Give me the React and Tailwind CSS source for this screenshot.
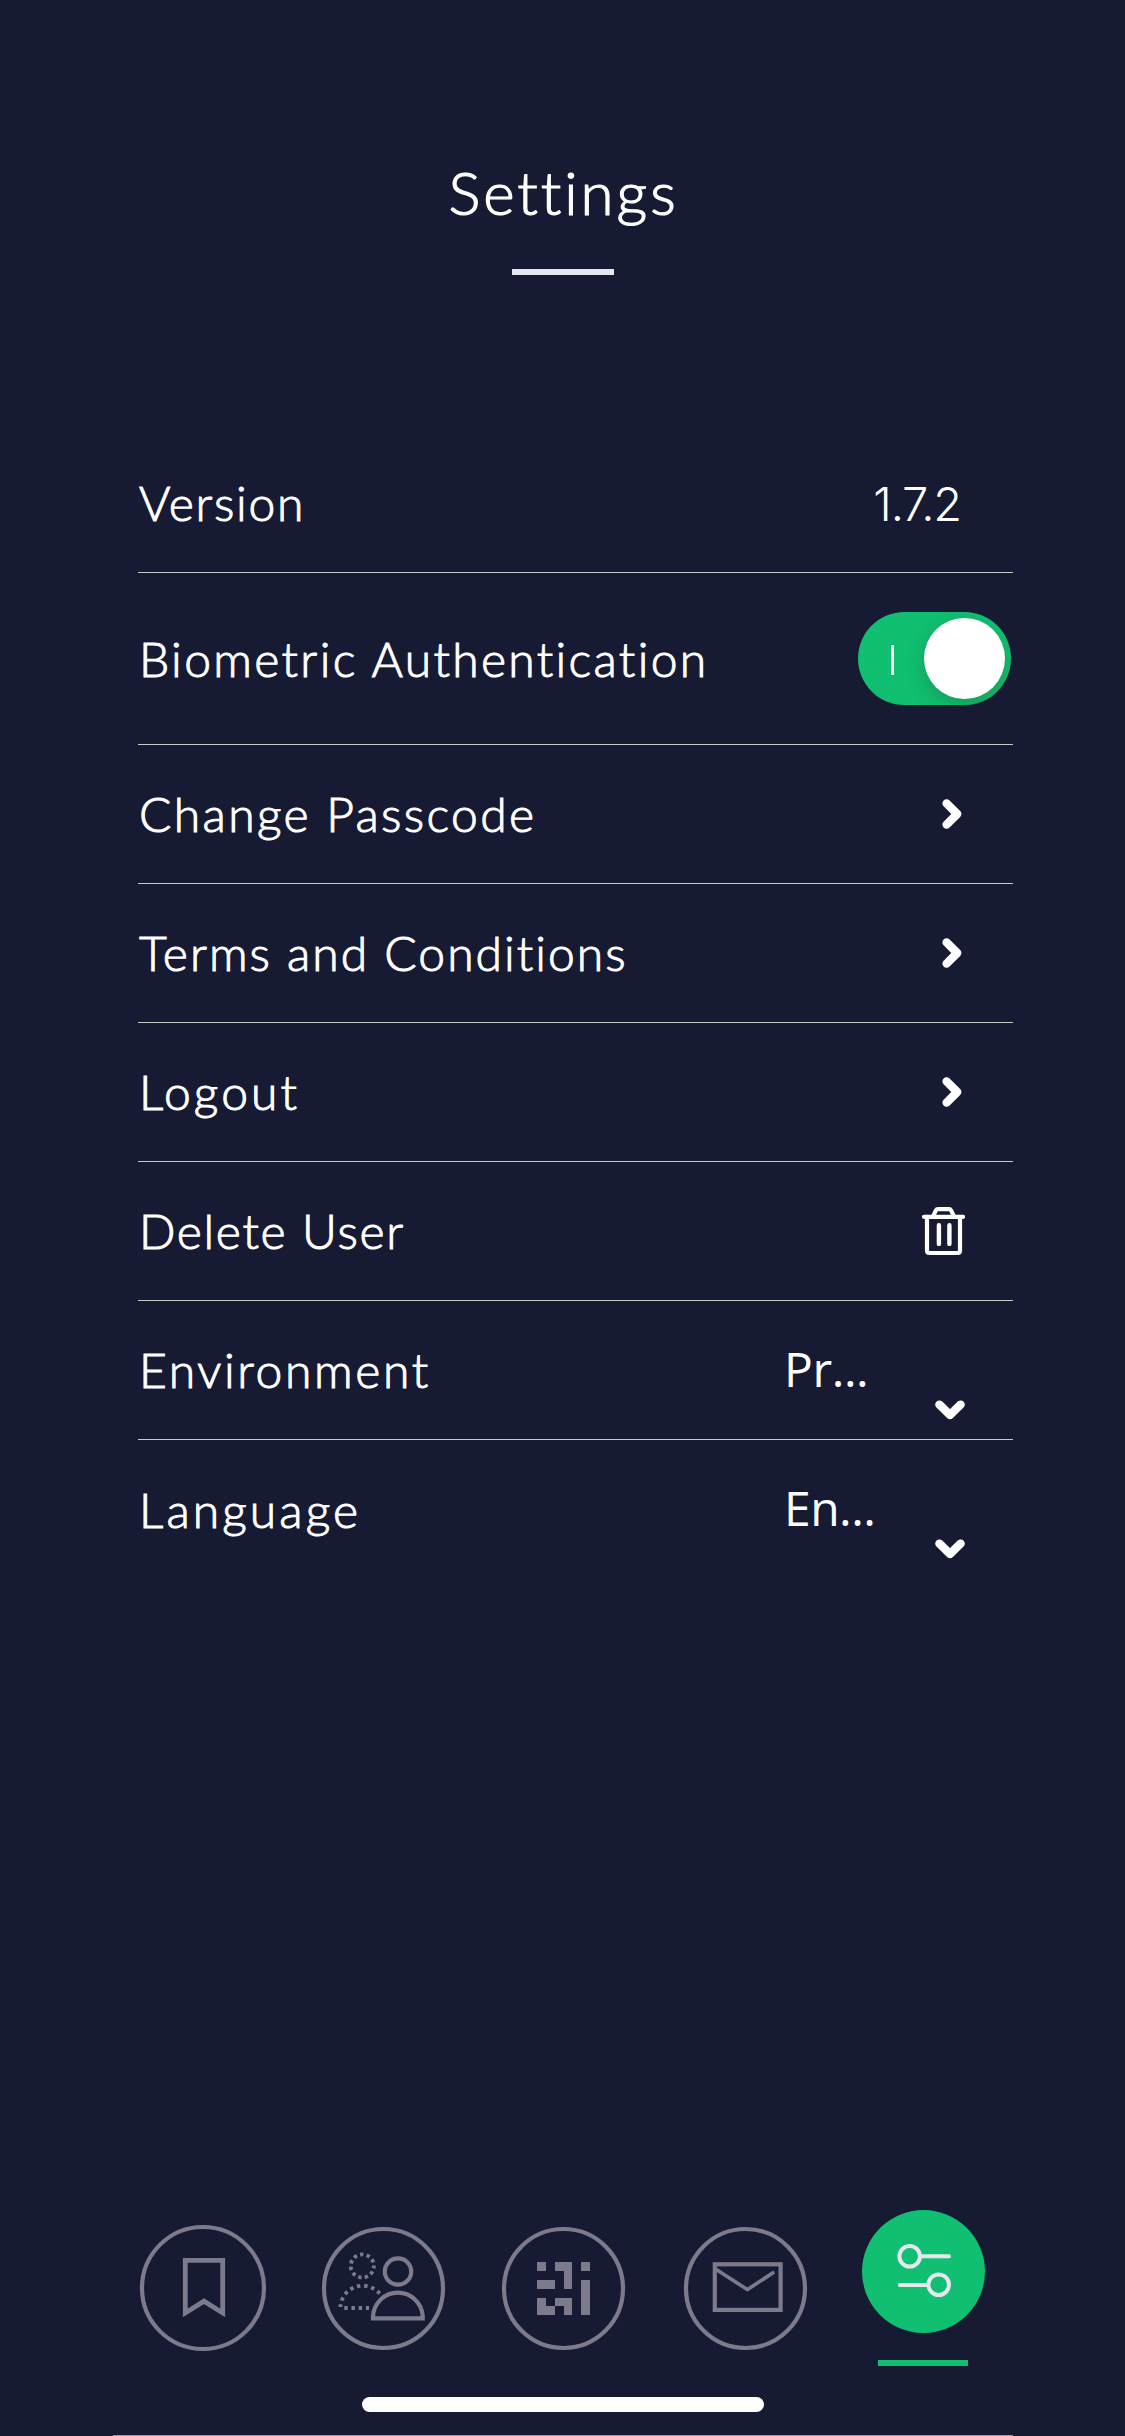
import React from "react";

const LABEL = "block whitespace-pre font-['Lato',sans-serif] text-[48px] font-light leading-[58px] [-webkit-text-stroke:1px_white]";

function Row({ label, labelClass, tall, last, align = "items-center", children }) {
  return (
    <li
      className={`flex justify-between ${align} ${tall ? "h-[172px]" : "h-[139px]"} ${
        last ? "" : "border-b border-[#c9c9c6]"
      }`}
    >
      <span className={`${LABEL} self-center ${labelClass}`}>{label}</span>
      {children}
    </li>
  );
}

function ChevronRight() {
  return (
    <svg className="mr-[50px] h-[32px] w-[22px]" viewBox="0 0 22 32" fill="none" stroke="#fff" strokeWidth="8.4" strokeLinecap="round" strokeLinejoin="round">
      <path d="M5.6 5.4 L16.2 16 L5.6 26.6" />
    </svg>
  );
}

function ChevronDown() {
  return (
    <svg className="mt-[98px] mr-[47px] h-[22px] w-[32px]" viewBox="0 0 32 22" fill="none" stroke="#fff" strokeWidth="8.4" strokeLinecap="round" strokeLinejoin="round">
      <path d="M5.4 5.6 L16 15.9 L26.6 5.6" />
    </svg>
  );
}

function Trash() {
  return (
    <svg className="mr-[48px] mt-[43px] h-[52px] w-[44px]" viewBox="0 0 44 52" fill="none" stroke="#fff" strokeWidth="4.2" strokeLinecap="round" strokeLinejoin="round">
      <path d="M3 11.8 H42" />
      <path d="M6 11.8 V45.6 Q6 48 8.4 48 H36.6 Q39 48 39 45.6 V11.8" />
      <path d="M12.5 10.4 L14.8 5.6 Q15.6 4.2 17 4.2 H28 Q29.4 4.2 30.2 5.6 L32.5 10.4" />
      <path d="M17.9 20.3 V38.9 M28.4 20.3 V38.9" strokeWidth="4.4" />
    </svg>
  );
}

function Toggle() {
  return (
    <span className="mr-[2px] flex h-[93px] w-[153px] items-center justify-between overflow-hidden rounded-full bg-[#10bf71] pr-[6px] pl-[33px]">
      <span className="mt-[3px] h-[30px] w-[3px] bg-white" />
      <span className="h-[81px] w-[81px] rounded-full bg-white shadow-[0_6px_18px_rgba(40,70,30,0.3)]" />
    </span>
  );
}

function Picker({ text, textClass }) {
  return (
    <span className="flex w-[229px] justify-between">
      <span className={`mt-[39px] font-['Open_Sans',sans-serif] text-[48px] leading-[58px] ${textClass}`}>{text}</span>
      <ChevronDown />
    </span>
  );
}

function NavIcon({ children, className = "" }) {
  return (
    <svg className={`h-[126px] w-[126px] overflow-visible ${className}`} viewBox="0 0 126 126" fill="none" stroke="#7d7a8b" strokeWidth="4.2">
      {children}
    </svg>
  );
}

const QR_CELLS = [
  [0, 0, 1, 1], [2, 0, 2, 1], [5, 0, 1, 1], [3, 1, 1, 2], [0, 2, 2, 1], [5, 2, 1, 4],
  [0, 4, 1, 2], [1, 5, 1, 1], [2, 4, 2, 1], [3, 5, 1, 1],
];

export default function App() {
  return (
    <main className="flex h-[2436px] w-[1125px] flex-col overflow-hidden bg-[#171a33] text-white">
      <header className="flex h-[434px] shrink-0 flex-col items-center pt-[156px]">
        <h1 className="h-[113px] pl-[2px] font-['Lato',sans-serif] text-[60px] font-light leading-[72px] tracking-[2.95px] [-webkit-text-stroke:1.2px_white]">
          Settings
        </h1>
        <span className="h-[6px] w-[102px] bg-[#e8e6ee]" />
      </header>

      <ul className="ml-[138px] w-[875px]">
        <Row label="Version" labelClass="ml-px tracking-[1.71px]">
          <span className="mr-[52px] mt-[2px] font-['Inter',sans-serif] text-[47px] font-light leading-[58px] tracking-[-1.2px]">1.7.2</span>
        </Row>
        <Row label="Biometric Authentication" labelClass="ml-px tracking-[2.35px]" tall>
          <Toggle />
        </Row>
        <Row label="Change Passcode" labelClass="ml-px tracking-[2.35px]">
          <ChevronRight />
        </Row>
        <Row label="Terms and Conditions" labelClass="ml-px tracking-[2.03px]">
          <ChevronRight />
        </Row>
        <Row label="Logout" labelClass="ml-px tracking-[3.1px]">
          <ChevronRight />
        </Row>
        <Row label="Delete User" labelClass="ml-px tracking-[1.7px]" align="items-start">
          <Trash />
        </Row>
        <Row label="Environment" labelClass="ml-px tracking-[2.65px]" align="items-start">
          <Picker text="Pr..." textClass="tracking-[-0.4px]" />
        </Row>
        <Row label="Language" labelClass="ml-px tracking-[3.1px]" align="items-start" last>
          <Picker text="En..." textClass="tracking-[-0.5px]" />
        </Row>
      </ul>

      <footer className="mt-auto">
        <nav className="ml-[113px] grid h-[189px] w-[900px] grid-cols-5 justify-items-center">
          <NavIcon className="mt-[17px]">
            <circle cx="63" cy="63" r="61" />
            <path d="M45.3 35.3 H82.7 V88 L64 76.2 L45.3 88 Z" strokeWidth="4.8" />
          </NavIcon>
          <NavIcon className="mt-[17px]">
            <circle cx="63.5" cy="63.5" r="59.5" />
            <circle cx="78" cy="46.5" r="13.2" />
            <path d="M53 93.3 V91 A24.9 24.9 0 0 1 102.7 91 V93.3 Z" />
            <circle cx="42.3" cy="41" r="11.6" strokeWidth="3.8" strokeDasharray="3.4 3.23" strokeDashoffset="1" />
            <path d="M59.7 68.6 A22.3 22.3 0 0 0 20.4 82" strokeWidth="3.8" strokeDasharray="3.4 3.8" />
            <path d="M24.3 83 H49" strokeWidth="3.8" strokeDasharray="3.4 3.8" />
          </NavIcon>
          <NavIcon className="mt-[17px]">
            <circle cx="63.5" cy="63.5" r="59.5" />
            <g transform="translate(37.3 37.3) scale(8.8)" fill="#7d7a8b" stroke="none" shapeRendering="crispEdges">
              {QR_CELLS.map(([x, y, w, h]) => (
                <rect key={`${x}-${y}`} x={x} y={y} width={w} height={h} />
              ))}
            </g>
          </NavIcon>
          <NavIcon className="mt-[17px]">
            <circle cx="65.5" cy="63.5" r="59.5" />
            <rect x="34.8" y="39.3" width="65.8" height="45.6" />
            <path d="M35.5 44 L67.4 64.6 L94.2 47" strokeWidth="3.6" />
          </NavIcon>
          <div className="flex flex-col items-center">
            <NavIcon>
              <circle cx="63.5" cy="63.5" r="61.5" fill="#10bf71" stroke="none" />
              <g stroke="#e8e6ee" strokeWidth="4" strokeLinecap="round">
                <circle cx="49.7" cy="48.3" r="10.3" />
                <path d="M61 48.3 H89" />
                <circle cx="78.7" cy="76.7" r="10.3" />
                <path d="M39.8 77 H67" />
              </g>
            </NavIcon>
            <span className="mt-[26px] h-[6px] w-[90px] bg-[#10bf71]" />
          </div>
        </nav>
        <div className="mx-auto h-[15px] w-[402px] rounded-full bg-white" />
        <div className="mt-[23px] ml-[113px] h-px w-[900px] bg-[#9a98a8]" />
      </footer>
    </main>
  );
}
